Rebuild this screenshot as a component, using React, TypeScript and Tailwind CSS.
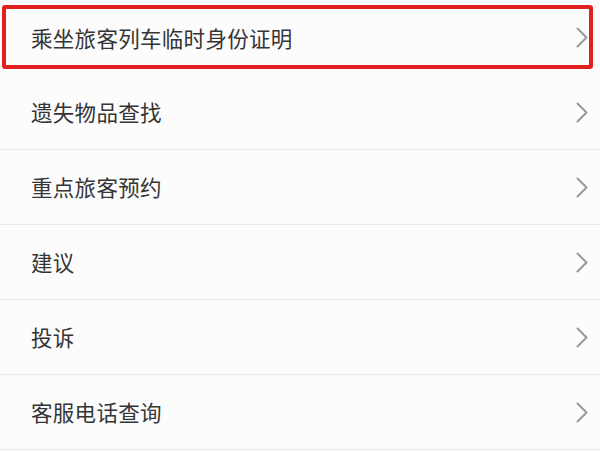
const items = [
  "乘坐旅客列车临时身份证明",
  "遗失物品查找",
  "重点旅客预约",
  "建议",
  "投诉",
  "客服电话查询",
];

const Chevron = () => (
  <svg width="12" height="21" viewBox="0 0 12 21" fill="none" className="shrink-0">
    <path d="M1.5 1.5 L10.5 10.5 L1.5 19.5" stroke="#999999" strokeWidth="2" strokeLinecap="round" strokeLinejoin="round" />
  </svg>
);

export default function App() {
  return (
    <div
      className="w-[600px] h-[451px] overflow-hidden bg-[#fcfcfc] text-[#353535]"
      style={{ fontFamily: '"Noto Sans CJK SC", "Noto Sans", sans-serif' }}
    >
      {items.map((label, i) => (
        <div
          key={label}
          className={
            i === 0
              ? "relative h-[75px] flex items-center justify-between pl-[31px] pr-[12px]"
              : "h-[75px] flex items-center justify-between pl-[31px] pr-[12px] border-b border-[#e9e9e9]"
          }
        >
          <span className="text-[21.5px] leading-none tracking-[0.3px]">{label}</span>
          <Chevron />
          {i === 0 && (
            <div className="absolute left-[2px] top-[5px] w-[591px] h-[64px] border-4 border-[#e3201f] rounded-[3px]" />
          )}
        </div>
      ))}
    </div>
  );
}
